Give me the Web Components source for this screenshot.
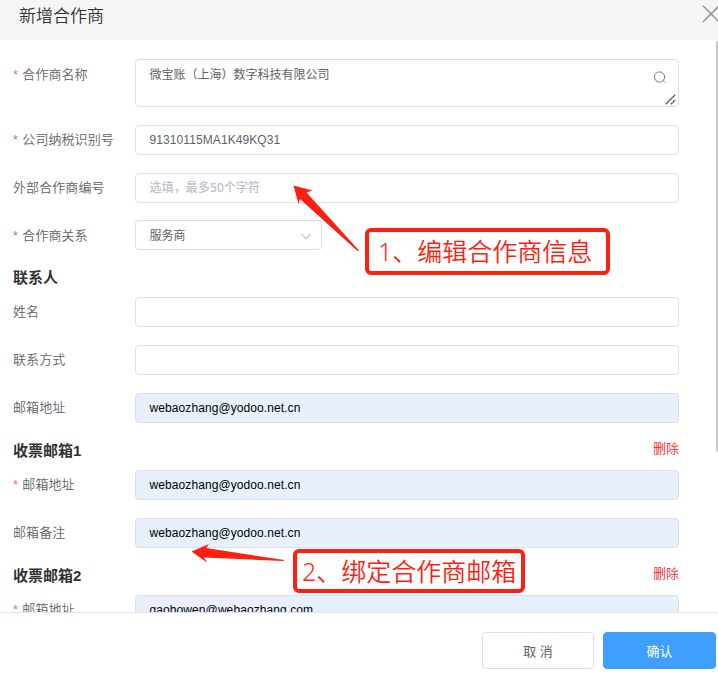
<!DOCTYPE html>
<html lang="zh-CN">
<head>
<meta charset="utf-8">
<title>新增合作商</title>
<style>
html,body{margin:0;padding:0;background:#fff}
body{width:718px;height:680px;overflow:hidden;font-family:"Liberation Sans","Noto Sans CJK SC",sans-serif}
</style>
</head>
<body>
<partner-dialog></partner-dialog>
<script>
const define = (name, html, init) => customElements.define(name, class extends HTMLElement {
  constructor() {
    super();
    const t = document.createElement('template');
    t.innerHTML = html;
    this.attachShadow({ mode: 'open' }).appendChild(t.content.cloneNode(true));
    if (init) init(this);
  }
});

// One labelled row of the form
define('form-row', `
<style>
:host{display:flex;align-items:flex-start;margin-bottom:18px}
:host([tight]){margin-bottom:17px}
:host([last]){margin-bottom:0}
.label{width:122px;flex:none;height:28px;line-height:28px;font-size:13px;letter-spacing:.08px;color:#606266;font-family:"Noto Sans CJK SC",sans-serif;font-weight:350;white-space:nowrap}
:host([low]) .label{line-height:30px}
.star{display:none;color:#f56c6c;width:9.3px;font-size:13px;font-family:"Liberation Sans",sans-serif}
:host([required]) .star{display:inline-block}
.field{flex:1;min-width:0}
</style>
<div class="label"><span class="star">*</span><slot name="label"></slot></div>
<div class="field"><slot></slot></div>`);

// Bordered text box, with an optional trailing icon
define('text-field', `
<style>
:host{display:flex;align-items:center;justify-content:space-between;box-sizing:border-box;width:544px;height:30px;border:1px solid #dcdfe6;border-radius:4px;padding:0 14px 1px 13.6px;font-size:12px;color:#606266;line-height:18px;background:#fff;white-space:nowrap}
:host([code]){letter-spacing:.08px}
:host([filled]){background:#e8f0fe;color:#000;letter-spacing:.08px}
:host([hint]){color:#bcc1ca;font-weight:500;font-family:"Noto Sans","Noto Sans CJK SC",sans-serif;letter-spacing:.08px}
:host([select]){width:187px;padding:1px 9px 0 13.6px}
:host([area]){height:48px;align-items:flex-start;padding:6px 11px 0 13.6px;position:relative}
</style>
<span><slot></slot></span><slot name="icon"></slot><slot name="grip"></slot>`);

// Bold group heading with an optional action on the right
define('section-title', `
<style>
:host{display:flex;align-items:flex-start;justify-content:space-between;box-sizing:border-box;height:47px;width:666px;padding-top:17px;font:bold 15px/22px "Liberation Sans","Noto Sans CJK SC",sans-serif;color:#303133}
::slotted([slot=action]){font:350 13px/20px "Noto Sans CJK SC",sans-serif;color:#f02424;margin-top:-2px}
</style>
<span><slot></slot></span><slot name="action"></slot>`);

define('dialog-button', `
<style>
:host{display:flex;align-items:center;justify-content:center;box-sizing:border-box;width:112px;height:37px;border:1px solid #dcdfe6;border-radius:4px;font-size:13px;color:#606266;background:#fff;padding-bottom:1px}
:host([primary]){width:113px;background:#409eff;border-color:#409eff;color:#fff}
</style><slot></slot>`);

// Red note laid over the form
define('callout-note', `
<style>
:host{position:absolute;box-sizing:border-box;border:4px solid #ff1e10;border-radius:6px;color:#ff1e10;font-family:"Noto Sans","Noto Sans CJK SC",sans-serif;font-weight:350;font-size:25px;white-space:nowrap}
:host([n="1"]){left:365px;top:228px;width:245px;height:47px;padding-left:9px;line-height:38px}
:host([n="2"]){left:293px;top:549px;width:232px;height:44px;padding-left:5px;line-height:36px}
</style><slot></slot>`);

define('partner-dialog', `
<style>
:host{display:flex;flex-direction:column;width:718px;height:680px;position:relative;overflow:hidden;background:#fff}
header{height:40px;flex:none;background:#f5f5f5;display:flex;justify-content:space-between;overflow:hidden}
h1{margin:0;padding-left:19px;font:350 17px/29px "Noto Sans CJK SC",sans-serif;color:#303133}
header svg{margin:5px -2px 0 0;flex:none}
main{height:572px;flex:none;box-sizing:border-box;padding:19px 0 0 13px;overflow:hidden;position:relative}
.bar{position:absolute;right:0;top:1px;width:2px;height:411px;background:#c8c8c8;border-radius:2px 0 0 2px}
footer{flex:1;box-sizing:border-box;border-top:1px solid #e4e4e4;display:flex;justify-content:flex-end;gap:9px;padding:19px 2px 0 0}
.grip{position:absolute;right:2px;bottom:1px}
.search{margin-top:3px}
svg{display:block}
.arrows{position:absolute;left:0;top:0}
</style>
<header><h1>新增合作商</h1>
<svg width="18" height="18" viewBox="0 0 18 18"><path d="M1 0.8 17 17M17 0.8 1 17" stroke="#909399" stroke-width="1.5" fill="none"/></svg></header>
<main>
<form-row required low><span slot="label">合作商名称</span><text-field area>微宝账（上海）数字科技有限公司
<svg slot="icon" class="search" width="14" height="16" viewBox="0 0 14 16"><circle cx="6.5" cy="8" r="5.1" fill="none" stroke="#777" stroke-width="1"/><path d="M10 11.4 12 13.4" stroke="#777"/></svg>
<svg slot="grip" class="grip" width="11" height="11" viewBox="0 0 11 11"><path d="M.8 10.2 10.2.8M6 10.2 10.2 6" stroke="#555" stroke-width="1.6" stroke-dasharray="2 .4"/></svg></text-field></form-row>
<form-row required><span slot="label">公司纳税识别号</span><text-field code>91310115MA1K49KQ31</text-field></form-row>
<form-row tight><span slot="label">外部合作商编号</span><text-field hint>选填，最多50个字符</text-field></form-row>
<form-row required last low><span slot="label">合作商关系</span><text-field select>服务商<svg slot="icon" width="12" height="8" viewBox="0 0 12 8"><path d="M1.2 1.8 6 6.6 10.8 1.8" fill="none" stroke="#c0c4cc" stroke-width="1.1"/></svg></text-field></form-row>
<section-title>联系人</section-title>
<form-row><span slot="label">姓名</span><text-field></text-field></form-row>
<form-row><span slot="label">联系方式</span><text-field></text-field></form-row>
<form-row last><span slot="label">邮箱地址</span><text-field filled>webaozhang@yodoo.net.cn</text-field></form-row>
<section-title>收票邮箱1<span slot="action">删除</span></section-title>
<form-row required><span slot="label">邮箱地址</span><text-field filled>webaozhang@yodoo.net.cn</text-field></form-row>
<form-row last><span slot="label">邮箱备注</span><text-field filled>webaozhang@yodoo.net.cn</text-field></form-row>
<section-title>收票邮箱2<span slot="action">删除</span></section-title>
<form-row required last><span slot="label">邮箱地址</span><text-field filled>gaobowen@webaozhang.com</text-field></form-row>
<div class="bar"></div>
</main>
<footer><dialog-button>取 消</dialog-button><dialog-button primary>确认</dialog-button></footer>
<svg class="arrows" width="718" height="680" viewBox="0 0 718 680" fill="#ff1e10"><path d="M293.5 185.5 312.5 190.5 306.5 192.5 359 250.5 357.5 251 300 199 298.5 204Z"/><path d="M191.5 551.5 209 544 206 548 284 560 283.5 561 204 557.5 207 562.5Z"/></svg>
<callout-note n="1">1、编辑合作商信息</callout-note>
<callout-note n="2">2、绑定合作商邮箱</callout-note>`);
</script>
</body>
</html>
